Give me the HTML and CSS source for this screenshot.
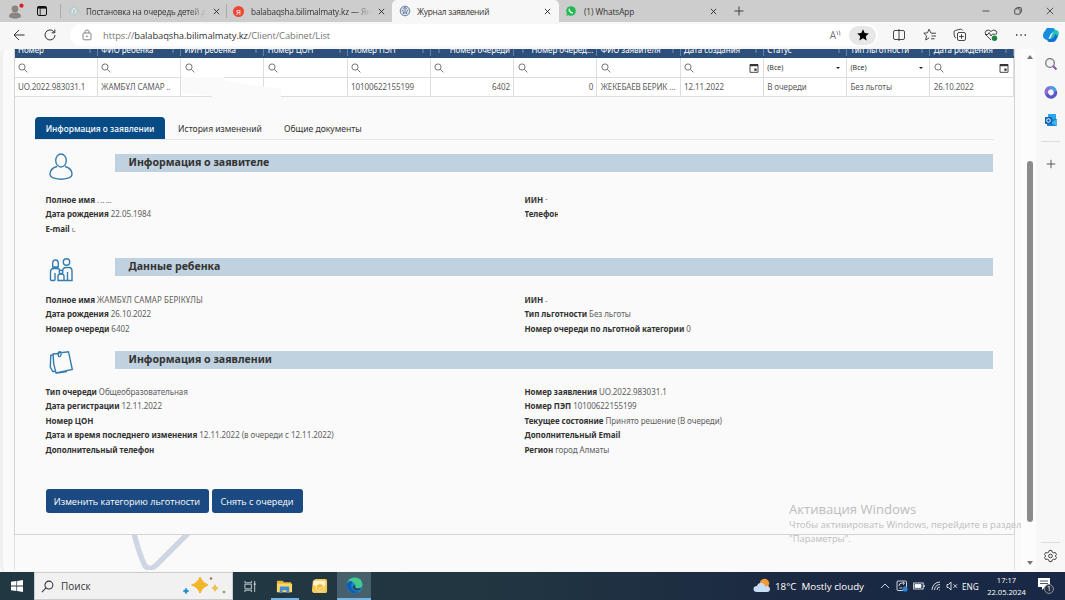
FILE: index.html
```html
<!DOCTYPE html>
<html lang="ru">
<head>
<meta charset="utf-8">
<title>Журнал заявлений</title>
<link rel="stylesheet" href="styles.css">
</head>
<body>
<svg class="defs" width="0" height="0">
  <defs>
    <symbol id="mag" viewBox="0 0 10 10"><circle cx="4" cy="4" r="3.1"/><path d="M6.3 6.3L9.4 9.4"/></symbol>
    <symbol id="close" viewBox="0 0 8 8"><path d="M1 1L7 7M7 1L1 7"/></symbol>
    <symbol id="cal" viewBox="0 0 10 10"><path d="M1 1.5H9V9.3H1Z"/><path d="M1 2.2H9" stroke-width="2"/><path d="M5.3 5.5H7.6V7.8H5.3Z" fill="#333" stroke="none"/></symbol>
  </defs>
</svg>
<header class="tabstrip">
  <div class="profile">
    <svg width="18" height="20" viewBox="0 0 18 20"><circle cx="8" cy="8" r="3.4" fill="#8b8580"/><path d="M2 16Q1.5 11.5 8 11.5T14 16Q8 19.5 2 16" fill="#8b8580"/><circle cx="14.5" cy="4.7" r="2.1" fill="#df1c2c"/></svg>
    <svg width="12" height="12" viewBox="0 0 12 12" fill="none" stroke="#111"><rect x="1.5" y="1.5" width="9" height="9" rx="1.5"/><path d="M1.5 2.6H10.5" stroke-width="2"/><path d="M4.2 3V10.5" stroke-width=".8"/></svg>
  </div>
  <div class="tab t1"><svg class="fav" viewBox="0 0 12 12"><circle cx="6" cy="6" r="4.8" fill="#bccdcf"/><path d="M4 9L4.5 4.5 6 3 7.5 4.5 8 9" fill="none" stroke="#e6eded"/></svg><span class="name fade">Постановка на очередь детей д</span><svg class="x"><use href="#close"/></svg></div>
  <div class="tab t2"><span class="ya">Я</span><span class="name fade">balabaqsha.bilimalmaty.kz — Янд</span><svg class="x"><use href="#close"/></svg></div>
  <div class="tab t3 active"><svg class="fav" viewBox="0 0 12 12" fill="none" stroke="#687f9d"><circle cx="6" cy="6" r="4.8" fill="#dce4ee"/><path d="M4 3.5L6 2.5 8 3.5M3 4.5Q5 6.5 4.5 9M9 4.5Q7 6.5 7.5 9M6 3V9"/></svg><span class="name">Журнал заявлений</span><svg class="x"><use href="#close"/></svg></div>
  <div class="tab t4"><svg class="fav" viewBox="0 0 12 12"><circle cx="6" cy="6" r="4.8" fill="#20b954"/><path d="M1.4 10.7L2 8 4 10Z" fill="#20b954"/><path d="M4.2 3.7Q4 7.3 8 8.1" fill="none" stroke="#fff" stroke-width="1.3"/></svg><span class="name">(1) WhatsApp</span><svg class="x"><use href="#close"/></svg></div>
  <svg class="plus" viewBox="0 0 10 10"><path d="M5 .5V9.5M.5 5H9.5"/></svg>
  <div class="wincontrols">
    <svg viewBox="0 0 8 8"><path d="M.5 4H7.5"/></svg>
    <svg viewBox="0 0 8 8"><rect x=".7" y="1.8" width="5.4" height="5.4" rx="1"/><path d="M2.3 1.5Q2.5.5 3.5.5H6Q7.4.5 7.4 2V4.5Q7.4 5.6 6.5 5.8"/></svg>
    <svg viewBox="0 0 8 8"><path d="M.8.8L7.2 7.2M7.2.8L.8 7.2"/></svg>
  </div>
</header>
<nav class="toolbar">
  <svg class="back" viewBox="0 0 12 12"><path d="M11.5 6H1M6 1L1 6 6 11"/></svg>
  <svg class="reload" viewBox="0 0 12 12"><path d="M11 6A5 5 0 1 1 9.3 2.2L10.7 3.6M10.8.5V3.8H7.6"/></svg>
  <div class="address">
    <svg class="lock" viewBox="0 0 10 12"><rect x="1" y="4" width="8" height="6.8" rx="1"/><path d="M3 4V2.8Q3 1 5 1T7 2.8V4"/><circle cx="5" cy="7.3" r=".5"/></svg>
    <span class="url">https://<b>balabaqsha.bilimalmaty.kz</b>/Client/Cabinet/List</span>
    <span class="read">A<svg viewBox="0 0 5 8"><path d="M.7 1.2Q2 3 1.6 4.8M2.8.4Q4.4 2.8 3.8 5.6"/></svg></span>
    <span class="starpill"><svg viewBox="0 0 12 12"><path d="M6 .3L7.7 4 11.8 4.4 8.8 7.2 9.6 11.4 6 9.2 2.4 11.4 3.2 7.2.2 4.4 4.3 4Z" fill="#000"/></svg></span>
  </div>
  <div class="tools">
    <svg viewBox="0 0 14 14"><rect x="1.5" y="2.5" width="11" height="9" rx="1.5"/><path d="M7 1V13"/></svg>
    <svg viewBox="0 0 14 14"><path d="M8 5L6 1.2 4.5 4.8.8 5.2 3.5 7.8 2.7 12 6.2 9.8M8 5.2H13M8.5 8H13M8 10.8H11.5"/></svg>
    <svg viewBox="0 0 14 14"><rect x="4.5" y="4.5" width="8" height="8" rx="1.5"/><path d="M3 10Q1.5 9.5 1.3 8L1 4Q1 2.8 2.2 2.5L7.5 1.2Q9 1 9.5 2.5M8.5 6.2V10.8M6.2 8.5H10.8"/></svg>
    <svg viewBox="0 0 14 14"><path d="M7 12L2 7Q.3 4.6 2 2.8 4.5.9 7 3.4 9.5.9 12 2.8 13.6 4.6 12 6.7M1 6.5H4L5.2 4.5 7 8 8.3 6.2H11.5"/><circle cx="10.5" cy="10.3" r="2.7" fill="#188440" stroke="none"/></svg>
    <svg viewBox="0 0 14 14"><path d="M2 7H3.4M6.3 7H7.7M10.6 7H12" stroke-width="1.5"/></svg>
  </div>
  <svg class="copilot" viewBox="0 0 18 18"><path d="M5 2H11Q13 2 13.7 5L10 7Q8 8 7 12L6 14Q2 14 1 10Z" fill="#1699dd"/><path d="M5 2H10L7.5 10Q6 14 3.5 13 0 11 1.5 7Z" fill="#168ce0"/><path d="M12.5 4H14Q18 5 16.5 9L14 14Q13 16 10 16H7Q5 16 5 13Q8 14 9.2 10Z" fill="#26c4b5"/><path d="M5 13H9Q12 12 13 8L16 10 14 14Q13 16 10 16H7Z" fill="#176bdc"/></svg>
</nav>
<div class="workspace">
<main class="viewport">
  <div class="journal">
    <div class="grid head">
      <span>Номер<i></i></span><span>ФИО ребенка<i></i></span><span>ИИН ребенка<i></i></span><span>Номер ЦОН<i></i></span><span>Номер ПЭП<i></i></span><span class="num"><i></i>Номер очереди</span><span class="num"><i></i>Номер очеред...</span><span>ФИО заявителя<i></i></span><span>Дата создания<i></i></span><span>Статус<i></i></span><span>Тип льготности<i></i></span><span>Дата рождения<i></i></span>
    </div>
    <div class="grid filter">
      <span><svg><use href="#mag"/></svg></span><span><svg><use href="#mag"/></svg></span><span><svg><use href="#mag"/></svg></span><span><svg><use href="#mag"/></svg></span><span><svg><use href="#mag"/></svg></span><span><svg><use href="#mag"/></svg></span><span><svg><use href="#mag"/></svg></span><span><svg><use href="#mag"/></svg></span><span><svg><use href="#mag"/></svg><svg class="cal"><use href="#cal"/></svg></span><span>(Все)<em></em></span><span>(Все)<em></em></span><span><svg><use href="#mag"/></svg><svg class="cal"><use href="#cal"/></svg></span>
    </div>
    <div class="grid data">
      <span>UO.2022.983031.1</span><span>ЖАМБҰЛ САМАР ..</span><span></span><span></span><span>10100622155199</span><span class="num">6402</span><span class="num">0</span><span class="applicant">ЖЕКЕБАЕВ БЕРИК ...</span><span>12.11.2022</span><span>В очереди</span><span>Без льготы</span><span>26.10.2022</span>
      <svg class="smudge" viewBox="0 0 100 22"><path d="M0 0H42L44 4 100 12V22H30V19L0 16Z" fill="#fafafa"/></svg>
    </div>
    <div class="tabs"><span class="selected"><b>Информация о заявлении</b></span><span class="history">История изменений</span><span class="docs">Общие документы</span></div>
    <section class="sec s1">
      <div class="title"><svg viewBox="0 0 30 32"><ellipse cx="15" cy="10.5" rx="5.3" ry="6.5"/><path d="M11 16.5Q4 18.5 4 24Q4 27 8 28.2Q15 30.4 22 28.2Q26 27 26 24Q26 18.5 19 16.5"/></svg><h2><span>Информация о заявителе</span></h2></div>
      <div class="info"><div><p><b>Полное имя</b> <small>. .. ...</small></p><p><b>Дата рождения</b> 22.05.1984</p><p><b>E-mail</b> <small>ι.</small></p></div><div><p><b>ИИН</b> <small class="up">-</small></p><p><b class="cut">Телефон</b></p></div></div>
    </section>
    <section class="sec s2">
      <div class="title"><svg viewBox="0 0 30 32"><circle cx="20.5" cy="8" r="3.2"/><path d="M6.7 13V9.5Q6.7 6 9.5 6T12.3 9.5V13ZM9 26.5H5.5Q4.5 26.5 4.5 25V18Q4.5 14.5 8 14.5H11Q13.5 14.5 14 17M9 19V26.5M12 26.5V22Q12 20 15 20T18 22V26.5ZM16.5 17Q17 13.5 20 13.5H23Q26 13.5 26 17V26.5H18M21.5 18V26.5"/><circle cx="15" cy="18" r="1.8"/></svg><h2><span>Данные ребенка</span></h2></div>
      <div class="info"><div><p><b>Полное имя</b> <span class="fullname">ЖАМБҰЛ САМАР БЕРІКҰЛЫ</span></p><p><b>Дата рождения</b> 26.10.2022</p><p><b>Номер очереди</b> 6402</p></div><div><p><b>ИИН</b> <small>-</small></p><p><b>Тип льготности</b> Без льготы</p><p><b>Номер очереди по льготной категории</b> 0</p></div></div>
    </section>
    <section class="sec s3">
      <div class="title"><svg viewBox="0 0 30 32"><path d="M12.5 6L22.5 4.7 26.3 22.5 10 26Q7 17 7 7L12 6.5M7 8L4.8 8.2 4.3 20 6.8 24.5H9.3M12.3 5V8.5Q12.5 10 14 9.5L15.2 7.5V5M12.3 5.5Q13.8 4 15.2 5.5M11 26L21 24.5"/></svg><h2><span>Информация о заявлении</span></h2></div>
      <div class="info"><div><p><b>Тип очереди</b> Общеобразовательная</p><p><b>Дата регистрации</b> 12.11.2022</p><p><b>Номер ЦОН</b></p><p><b>Дата и время последнего изменения</b> 12.11.2022 (в очереди с 12.11.2022)</p><p><b>Дополнительный телефон</b></p></div><div><p><b>Номер заявления</b> UO.2022.983031.1</p><p><b>Номер ПЭП</b> 10100622155199</p><p><b>Текущее состояние</b> Принято решение (В очереди)</p><p><b>Дополнительный Email</b></p><p><b>Регион</b> город Алматы</p></div></div>
    </section>
    <div class="actions"><button class="change">Изменить категорию льготности</button><button class="remove">Снять с очереди</button></div>
  </div>
  <div class="below"><svg viewBox="0 0 70 36"><path d="M3-2Q8 18 14 31Q19 38 27 30L60-3" fill="none" stroke="#cfd6e3" stroke-width="5.5"/></svg></div>
  <div class="watermark"><strong>Активация Windows</strong><span class="w1">Чтобы активировать Windows, перейдите в раздел</span><span class="w2">"Параметры".</span></div>
</main>
<div class="scroll"><i class="up"></i><div class="thumb"></div><i class="down"></i></div>
<aside class="side">
  <svg class="find" viewBox="0 0 14 14"><circle cx="6" cy="6" r="4.3" fill="#f3f3f3" stroke="#77777c" stroke-width="1.3"/><path d="M9.3 9.3L12.5 12.5" stroke="#8a52b7" stroke-width="2"/></svg>
  <svg viewBox="0 0 14 14" fill="none" stroke-width="3.4"><path d="M3 9.5A4.3 4.3 0 0 1 6 2.8" stroke="#8a6bd2"/><path d="M5.5 2.9A4.3 4.3 0 0 1 11.3 7" stroke="#4b9ae2"/><path d="M11.3 6.5A4.3 4.3 0 0 1 3 9" stroke="#5a55c8"/></svg>
  <svg viewBox="0 0 14 14"><path d="M4 1H12V7H4Z" fill="#28a8ea"/><path d="M3 6H13V13H3Z" fill="#1683cf"/><path d="M7 10L13 6V13Z" fill="#48b6ee"/><rect x="1" y="4" width="7" height="7" rx=".7" fill="#0f63b5"/><circle cx="4.5" cy="7.5" r="1.8" fill="none" stroke="#fff"/></svg>
  <hr>
  <svg class="add" viewBox="0 0 10 10"><path d="M5 1.5V8.5M1.5 5H8.5" stroke="#555" stroke-width=".8"/></svg>
  <hr class="last">
  <svg class="gear" viewBox="0 0 14 14" fill="none" stroke="#333"><path d="M5.7 1H8.3L8.8 2.8 10.5 3.7 12.2 3.2 13.5 5.5 12.1 7 13.5 8.7 12.2 10.8 10.4 10.4 8.8 11.3 8.3 13H5.7L5.2 11.3 3.6 10.4 1.8 10.8.5 8.7 1.9 7 .5 5.5 1.8 3.2 3.6 3.7 5.2 2.8Z"/><circle cx="7" cy="7" r="2"/></svg>
</aside>
</div>
<footer class="taskbar">
  <div class="start"><svg viewBox="0 0 12 12"><path d="M0 1.7L5.4 1V5.6H0ZM6.1.9L12 0V5.6H6.1ZM0 6.4H5.4V11L0 10.3ZM6.1 6.4H12V12L6.1 11.1Z" fill="#fff"/></svg></div>
  <div class="search"><svg class="sicon" viewBox="0 0 14 14"><circle cx="8.5" cy="5.5" r="4.3"/><path d="M5.3 8.5L1 13"/></svg><span>Поиск</span><svg class="sparkle" viewBox="0 0 44 20"><path d="M17 1Q19 7 25 9Q19 11 17 17Q15 11 8.5 9Q15 7 17 1Z" fill="#f3b52a" stroke="#f3b52a"/><path d="M32 8Q33 11 36 12Q33 13 32 16Q31 13 28 12Q31 11 32 8Z" fill="#f0c054"/><path d="M3 12L4 14 6 15 4 16 3 18 2 16 0 15 2 14Z" fill="#168bd0" stroke="#168bd0" stroke-width=".5"/><circle cx="28" cy="2.5" r="1.3" fill="#bd6754"/><circle cx="41" cy="16" r="1.3" fill="#8aa84f"/></svg></div>
  <div class="task view"><svg viewBox="0 0 14 14" fill="none" stroke="#c9d2d6"><path d="M1 1V3H8V1M1 13V11H8V13M1 4.5H8V9.5H1ZM11.5 1V13"/><path d="M10.5 4.5H12.5" stroke-width="2"/></svg></div>
  <div class="task open"><svg viewBox="0 0 18 18"><path d="M1 3H7L8.5 4.5H16V15H1Z" fill="#e9b43b"/><path d="M1 6H17V15H1Z" fill="#ffd767"/><path d="M4 16V10Q4 9 5 9H13Q14 9 14 10V16H11V13H7V16Z" fill="#438fce"/></svg></div>
  <div class="task"><svg viewBox="0 0 18 18"><path d="M2 3L5 1H15Q17 1 17 3V14Q17 16 15 16H4Q1 16 1 13Z" fill="#f4cb57"/><path d="M3 3H15V8L9 11 2 7Z" fill="#fff4d1"/><circle cx="9.5" cy="10" r="4" fill="#f5b92c" stroke="#fff0bd"/><path d="M7.5 10L9.3 11.5 12 9" fill="none" stroke="#fff"/></svg></div>
  <div class="task current"><svg viewBox="0 0 18 18"><circle cx="9" cy="9" r="8.5" fill="#178bd0"/><path d="M1 7Q3 .5 9 .5Q17 .5 17.5 8Q17 12 12 12Q9 12 10 9Q9 5 5 5Q3 5 1 7Z" fill="#43c98c"/><path d="M1 7Q3 3 7 5Q4 9 7 13Q9 16 14 15Q11 18 7 17Q0 14 .5 8Z" fill="#125eb3"/><path d="M10 9Q9 12 12 12H16L14 14Q9 15 7 11Q7 8 10 9Z" fill="#29475a"/></svg></div>
  <div class="tray">
    <svg class="weather" viewBox="0 0 18 16"><circle cx="11.5" cy="5.5" r="4.7" fill="#f19a36"/><path d="M4 14Q.5 14 .5 11T4 8Q5 4.5 8.5 5T12 8.5Q16.5 7 17 11Q17 14 14 14Z" fill="#c8def6"/></svg>
    <span class="forecast">18°C&nbsp; Mostly cloudy</span>
    <svg class="chev" viewBox="0 0 10 10"><path d="M1 7L5 3 9 7"/></svg>
    <svg class="upd" viewBox="0 0 12 12"><rect x="1" y="1" width="9.5" height="9.5" rx="1"/><path d="M3 6Q3 3 6 3H8M7 2L8.5 3.3 7 4.7M3.5 8H6"/><circle cx="9" cy="9" r="2.6" fill="#2d83d3" stroke="none"/></svg>
    <svg class="bat" viewBox="0 0 12 8"><rect x=".7" y="1" width="9.5" height="6"/><path d="M2 2.5H8V5.5H2Z" fill="#fff"/><path d="M11.3 3V5"/></svg>
    <svg class="wifi" viewBox="0 0 10 10"><path d="M1 9A8 8 0 0 1 9 1M3.5 9A5.5 5.5 0 0 1 9 3.5M6 9A3 3 0 0 1 9 6M8.3 9H9"/></svg>
    <svg class="vol" viewBox="0 0 12 10"><path d="M1 3.5H2.5L5 1V9L2.5 6.5H1ZM7.5 3.3L11 6.8M11 3.3L7.5 6.8"/></svg>
    <span class="lang">ENG</span>
    <div class="clock"><span>17:17</span><span>22.05.2024</span></div>
    <div class="notice"><svg viewBox="0 0 12 12"><path d="M0 0H12V9H7L4 12V9H0Z" fill="#fff"/><path d="M2 3H10M2 5.5H10" stroke="#223044"/></svg><span>1</span></div>
  </div>
</footer>
</body>
</html>
```

FILE: styles.css
```css
* { box-sizing: border-box; }
body { margin: 0; width: 1065px; height: 600px; overflow: hidden; display: flex; flex-direction: column; background: #f7f7f7; font-family: "Noto Sans", sans-serif; color: #333; white-space: nowrap; }
.defs { position: absolute; }
svg { flex: none; display: block; }

/* browser chrome */
.tabstrip { height: 22px; flex: none; display: flex; align-items: center; background: #cdcdcd; font: 8.3px "Open Sans", sans-serif; }
.profile { width: 61px; display: flex; align-items: center; gap: 11px; padding-left: 7px; border-right: 1px solid #aaa; height: 14px; }
.tab { display: flex; align-items: center; height: 22px; color: #333; }
.t1 { width: 165px; padding: 0 6px 0 7px; }
.t2 { width: 166px; padding: 0 7px 0 7px; position: relative; }
.t2::before { content: ""; position: absolute; left: 0; top: 4px; height: 14px; width: 1px; background: #aaa; }
.t3 { width: 167px; padding: 0 8px 0 7px; }
.t4 { width: 165px; padding: 0 7px 0 6px; }
.active { background: #f7f7f7; border-radius: 5px 5px 0 0; }
.fav { width: 12px; height: 12px; }
.name { flex: 1; overflow: hidden; margin: 0 7px 0 6px; }
.t1 .name { font-size: 8.1px; letter-spacing: -.18px; }
.t2 .name { font-size: 8.2px; letter-spacing: -.13px; margin-left: 7px; }
.t3 .name { margin-left: 6px; letter-spacing: -.25px; }
.t4 .name { margin-left: 7px; letter-spacing: -.1px; }
.fade { -webkit-mask-image: linear-gradient(90deg, #000 86%, transparent 100%); mask-image: linear-gradient(90deg, #000 86%, transparent 100%); }
.x { width: 7px; height: 7px; stroke: #222; stroke-width: 1; }
.ya { width: 11px; height: 11px; border-radius: 50%; background: #ed4734; color: #fff; font-size: 8px; line-height: 11px; text-align: center; }
.plus { width: 10px; height: 10px; margin-left: 10px; stroke: #333; stroke-width: .9; }
.wincontrols { margin-left: auto; display: flex; gap: 24px; padding-right: 11px; }
.wincontrols svg { width: 8px; height: 8px; fill: none; stroke: #333; stroke-width: .8; }
.toolbar { height: 26px; flex: none; display: flex; align-items: center; background: #f7f7f7; }
.back, .reload { width: 12px; height: 12px; fill: none; stroke: #333; stroke-width: 1; }
.back { margin-left: 13px; }
.reload { margin-left: 19px; }
.address { margin-left: 14px; width: 808px; height: 22px; border-radius: 11px; background: #fff; display: flex; align-items: center; }
.lock { width: 10px; height: 12px; margin-left: 12px; fill: none; stroke: #777; stroke-width: .9; }
.url { font: 9.4px "Open Sans", sans-serif; color: #777; margin-left: 11px; letter-spacing: -.09px; }
.url b { color: #333; font-weight: 400; }
.read { margin-left: auto; font: 10px "Open Sans", sans-serif; color: #777; margin-right: 8px; display: flex; }
.read svg { width: 5px; height: 8px; fill: none; stroke: #777; stroke-width: .8; margin-top: 2px; }
.starpill { width: 27px; height: 19px; border-radius: 10px; background: #e7e7e7; display: grid; place-items: center; margin-right: 2px; }
.starpill svg { width: 12px; height: 12px; }
.tools { display: flex; gap: 16.6px; margin-left: 14px; }
.tools svg { width: 14px; height: 14px; fill: none; stroke: #333; stroke-width: .9; }
.copilot { width: 18px; height: 18px; margin-left: 14px; }

/* journal page */
.workspace { height: 524px; flex: none; display: flex; background: #f7f7f7; padding-top: 1px; }
.viewport { width: 1021px; height: 522px; position: relative; background: #fafafa; border-left: 3px solid #f0f0f0; padding-left: 10.5px; border-radius: 6px 0 0 6px; }
.journal { width: 1001px; height: 486px; border: 1px solid #d4d4d4; border-top: 0; background: #fafafa; }
.grid { display: grid; grid-template-columns: repeat(12, 83.25px); position: relative; }
.grid > span { display: flex; align-items: center; padding: 0 3px 0 3.5px; border-right: 1px solid #dedede; overflow: hidden; }
.head { height: 9px; background: #2c4f7b; overflow: hidden; font-size: 8px; color: #fff; }
.head > span { height: 14px; margin-top: -7px; border-color: #66819f; letter-spacing: -.05px; }
.head i { width: 2px; height: 7px; background: #547391; margin-left: auto; margin-right: 3px; }
.num { justify-content: flex-end; }
.head .num i { margin: 0 auto 0 4px; }
.filter { height: 20px; background: #fff; border-bottom: 1px solid #dedede; font-size: 7px; }
.filter svg { width: 10px; height: 10px; fill: none; stroke: #666; stroke-width: .9; }
.filter .cal { margin-left: auto; margin-right: 1px; stroke: #333; }
.filter em { border: 2.5px solid transparent; border-top-color: #222; border-bottom: 0; margin-left: auto; margin-right: 3px; }
.data { height: 19px; background: #fff; border-bottom: 1px solid #dedede; font-size: 8px; color: #5c5c5c; letter-spacing: -.08px; }
.data > span { padding-bottom: 2px; }
.data .applicant { letter-spacing: -.12px; }
.smudge { position: absolute; left: 167px; top: -1px; width: 99px; height: 22px; }
.tabs { height: 42.5px; display: flex; align-items: flex-end; margin: 0 20px 0 20.5px; border-bottom: 1px solid #e7e7e7; font: 8.55px/22px "Noto Sans", sans-serif; }
.tabs > span { height: 22px; padding-top: 1px; }
.selected { width: 130px; background: #064a86; border-radius: 4px 4px 0 0; color: #fff; text-align: center; font-size: 8.4px; }
.selected b { font-weight: 500; }
.history { margin-left: 13px; width: 106px; }
.sec { padding: 0 20.5px 0 31px; }
.s1 { padding-top: 10px; height: 114px; }
.s2 { height: 93px; }
.s3 { height: 142px; }
.title { display: flex; height: 43px; }
.s2 .title { height: 39px; }
.s3 .title { height: 38px; }
.title svg { width: 30px; height: 32px; fill: none; stroke: #367dae; stroke-width: 1.4; }
.title h2 { margin: 4.5px 0 0 39px; flex: 1; height: 17.5px; padding-left: 14px; background: #c0d1df; font: bold 10.6px/17.5px "Noto Sans", sans-serif; color: #333; }
.info { display: grid; grid-template-columns: 479px 1fr; }
.info p { margin: 0; font-size: 8px; line-height: 14.6px; height: 14.6px; color: #606060; letter-spacing: -.05px; }
.info b { color: #333; }
.info small { font-size: 7px; }
.info .up { position: relative; top: -2px; }
.fullname { letter-spacing: .06px; }
.cut { display: inline-block; width: 33px; height: 14px; overflow: hidden; }
.actions { margin-left: 31px; display: flex; gap: 3px; }
.actions button { height: 24px; border: 0; border-radius: 3px; padding: 2px 0 0; background: #1b4a82; color: #fff; font: 9.1px "Open Sans", sans-serif; }
.actions .change { width: 163px; }
.actions .remove { width: 91px; }
.below { width: 1001px; height: 35px; border: 1px solid #e2e2e2; border-top: 0; border-bottom: 0; padding-left: 115px; }
.below svg { width: 70px; height: 35px; }
.watermark { position: absolute; left: 786px; top: 451px; width: 240px; display: flex; flex-direction: column; color: #bdbdbd; font: 9.3px/14px "Open Sans", sans-serif; }
.watermark strong { font-size: 13.1px; font-weight: 400; line-height: 18px; }
.watermark .w1 { letter-spacing: .02px; }
.watermark .w2 { font-size: 9.3px; }
.scroll { width: 15px; padding: 4px 4px 6px 6px; display: flex; flex-direction: column; align-items: center; background: #fcfcfc; border-radius: 0 6px 6px 0; height: 522px; }
.scroll .up { border: 3px solid transparent; border-bottom: 4px solid #777; border-top: 0; margin-top: 2px; }
.scroll .thumb { width: 6px; height: 361px; background: #8b8b8b; border-radius: 3px; margin-top: 102px; }
.scroll .down { border: 3px solid transparent; border-top: 4px solid #777; border-bottom: 0; margin-top: auto; }
.side { flex: 1; display: flex; flex-direction: column; align-items: center; padding-top: 8px; gap: 14px; }
.side svg { width: 14px; height: 14px; }
.side hr { width: 19px; margin: 0; border: 0; border-top: 1px solid #ddd; }
.side .add { width: 12px; height: 12px; margin-top: 2px; }
.side .last { margin-top: auto; margin-bottom: -8px; }
.side .gear { margin-bottom: 9px; width: 13px; }

/* taskbar */
.taskbar { height: 28px; flex: none; display: flex; background: linear-gradient(90deg, #213842, #213641 45%, #1b2942 75%, #182846); color: #fff; font: 10px "Open Sans", sans-serif; }
.start { width: 34px; display: grid; place-items: center; }
.start svg { width: 12px; height: 12px; }
.search { width: 199px; background: #f1f1f1; border: 1px solid #ccc; color: #333; display: flex; align-items: center; }
.sicon { width: 13px; height: 13px; margin-left: 6px; margin-right: 7px; fill: none; stroke: #333; stroke-width: 1.1; }
.sparkle { width: 44px; height: 20px; margin-left: auto; margin-right: 5px; }
.task { width: 35px; height: 28px; display: grid; place-items: center; }
.task svg { width: 17px; height: 17px; }
.view { width: 34px; }
.view svg { width: 13px; height: 13px; }
.open { background: linear-gradient(#74b5e8, #74b5e8) 4px 26px / 28px 2px no-repeat; }
.current { background: #47606b; border-bottom: 2px solid #74b5e8; width: 34px; }
.tray { margin-left: auto; display: flex; align-items: center; }
.tray svg { fill: none; stroke: #fff; stroke-width: .8; }
.weather { width: 18px; height: 16px; margin-right: 4px; }
.tray .weather { stroke: none; }
.forecast { width: 105px; font-size: 9.75px; }
.chev { width: 10px; height: 10px; }
.upd { width: 12px; height: 12px; margin-left: 6px; }
.bat { width: 12px; height: 8px; margin-left: 5px; }
.wifi { width: 10px; height: 10px; margin-left: 6px; }
.vol { width: 12px; height: 10px; margin-left: 5px; }
.lang { width: 25px; margin-left: 4px; font-size: 8.2px; }
.clock { width: 39px; text-align: center; font-size: 7.6px; line-height: 12px; display: flex; flex-direction: column; align-items: center; }
.notice { width: 15px; height: 20px; margin-left: 12px; margin-right: 12px; position: relative; }
.notice svg { width: 12px; height: 12px; margin-top: 2px; }
.tray .notice svg { stroke: none; }
.notice > span { position: absolute; left: 6px; top: 8px; width: 10px; height: 10px; border-radius: 50%; border: 1px solid #8b929c; background: #273249; font-size: 7px; line-height: 8px; text-align: center; }
```
